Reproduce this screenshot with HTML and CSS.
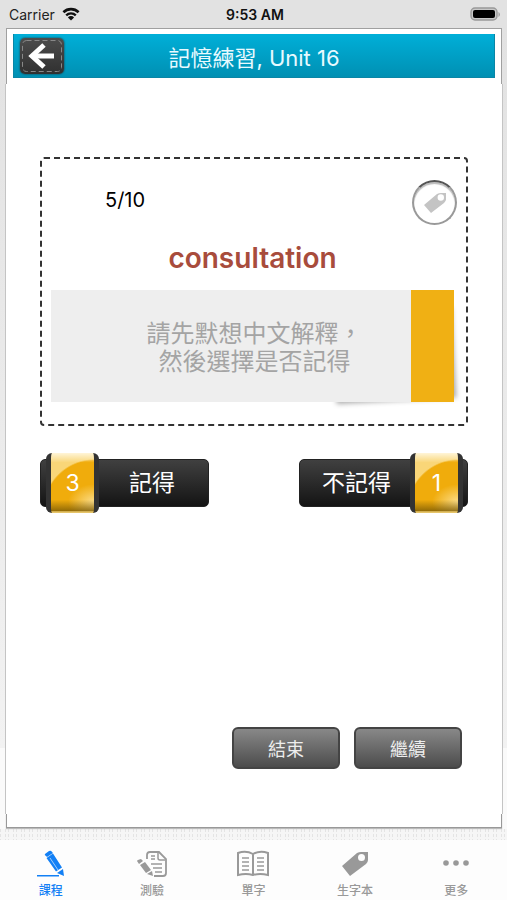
FILE: index.html
```html
<!DOCTYPE html>
<html lang="zh-Hant">
<head>
  <meta charset="UTF-8" />
  <meta name="viewport" content="width=device-width, initial-scale=1.0"/>
  <title>記憶練習, Unit 16</title>
  <link rel="stylesheet" href="styles.css">
</head>
<body>
  <div class="status-bar">
    <div class="carrier">
      <span>Carrier</span>
      <svg width="18" height="14" viewBox="0 0 18 14">
        <path d="M1.4 5.2a11 11 0 0 1 15.2 0" fill="none" stroke="#111" stroke-width="2.6"/>
        <path d="M4.2 8.3a7 7 0 0 1 9.6 0" fill="none" stroke="#111" stroke-width="2.4"/>
        <path d="M9 13.6L5.9 10.4a4.4 4.4 0 0 1 6.2 0z" fill="#111"/>
      </svg>
    </div>
    <div class="time">9:53 AM</div>
    <div class="battery">
      <svg width="31" height="15" viewBox="0 0 31 15">
        <rect x="1" y="1" width="26" height="12" rx="4" fill="#c8c8c8" stroke="#999" stroke-width="1.4"/>
        <rect x="3" y="3" width="22" height="8" rx="2" fill="#000"/>
        <path d="M28.5 5a3 3 0 0 1 0 5z" fill="#999"/>
      </svg>
    </div>
  </div>

  <main class="paper">
    <div class="paper-top">
      <header class="title-bar">
        <button class="back" aria-label="返回">
          <svg width="44" height="36" viewBox="0 0 44 36">
            <rect x="2.5" y="2.5" width="39" height="31" rx="4" fill="none" stroke="#888" stroke-dasharray="5 3"/>
            <path d="M24 7L12 18l12 11" fill="none" stroke="#fff" stroke-width="5"/>
            <path d="M13 18h21" stroke="#fff" stroke-width="5"/>
          </svg>
        </button>
        <h1>記憶練習, Unit 16</h1>
      </header>
    </div>

    <div class="paper-body">
      <section class="card">
        <div class="card-head">
          <span class="count">5/10</span>
          <button class="tag" aria-label="生字本">
            <svg width="24" height="22" viewBox="0 0 24 22">
              <path fill-rule="evenodd" d="M1 13L14 2Q16 1 18 1H23V8Q22 10 21 11L8 21zM21 5.5a3.200 3.200 0 1 0-6.400 0a3.200 3.200 0 1 0 6.400 0z" fill="#c4c4c4"/>
            </svg>
          </button>
        </div>
        <h2>consultation</h2>
        <div class="answer">
          <p>請先默想中文解釋，<br>然後選擇是否記得</p>
        </div>
      </section>

      <div class="choices">
        <button class="choice">
          <span class="badge">3</span>
          <span class="label">記得</span>
        </button>
        <button class="choice choice-right">
          <span class="label">不記得</span>
          <span class="badge">1</span>
        </button>
      </div>

      <div class="actions">
        <button class="action">結束</button>
        <button class="action">繼續</button>
      </div>
    </div>
    <div class="paper-foot"></div>
  </main>

  <nav class="tabs">
    <a href="#" class="active">
      <svg width="28" height="28" viewBox="0 0 28 28" fill="currentColor">
        <path d="M8 4l4-3q2-1 3 1l1 1-6 4-1-1q-2-1-1-2zM9.500 8l6.500-4.500 9 14-6 4zM20 23l6-4 1 7z"/>
        <path d="M13 8l8 12" stroke="#fff" stroke-width=".6"/>
        <path d="M0 25h22v1.500H0z"/>
      </svg>
      課程
    </a>
    <a href="#">
      <svg width="30" height="28" viewBox="0 0 30 28" fill="none" stroke="currentColor" stroke-width="1.800">
        <path d="M10 9V5q0-3 3-3h9l7 7v14q0 3-3 3H17"/>
        <path d="M21 3v5q0 2 2 2h5M14 6h4M14 9h4M14 14h11M16 18h9M18 22h7" stroke-width="1.500"/>
        <path d="M0 11q0-1 4-2l2 2-4 3zM3 15l5-3 6 8-5 3zM10 24l5-3 1 5z" fill="currentColor" stroke="none"/>
      </svg>
      測驗
    </a>
    <a href="#">
      <svg width="32" height="28" viewBox="0 0 32 28" fill="none" stroke="currentColor" stroke-width="2">
        <path d="M16 4Q9 0 1 3v22q8-2 15 0 7-2 15 0V3q-8-3-15 1zv21"/>
        <path d="M5 8h7M5 12h7M5 16h7M5 20h7M20 8h7M20 12h7M20 16h7M20 20h7" stroke-width="1.600"/>
      </svg>
      單字
    </a>
    <a href="#">
      <svg width="28" height="28" viewBox="0 0 28 28">
        <path fill-rule="evenodd" d="M1 16L16 3q2-1 4-1h7v8q0 2-2 4L9 26zM24 7.500a3.500 3.500 0 1 0-7 0a3.500 3.500 0 1 0 7 0z" fill="currentColor"/>
      </svg>
      生字本
    </a>
    <a href="#">
      <svg width="28" height="28" viewBox="0 0 28 28" fill="currentColor">
        <circle cx="4" cy="13" r="2.800"/>
        <circle cx="14" cy="13" r="2.800"/>
        <circle cx="24" cy="13" r="2.800"/>
      </svg>
      更多
    </a>
  </nav>
</body>
</html>
```
FILE: styles.css
```css
* {
  box-sizing: border-box;
}

body {
  margin: 0;
  min-height: 100vh;
  display: flex;
  flex-direction: column;
  font-family: Inter, "Noto Sans CJK TC", sans-serif;
  background: #f4f4f4;
}

h1, h2, p {
  margin: 0;
  font-weight: normal;
}

button {
  font-family: inherit;
  padding: 0;
  border: none;
  cursor: pointer;
}

svg {
  display: block;
}

.status-bar {
  height: 28px;
  padding: 0 6px 0 9px;
  display: grid;
  grid-template-columns: 1fr auto 1fr;
  align-items: center;
  font-size: 14px;
  color: #222;
  background: #e2e2e2;
}

.carrier {
  display: flex;
  align-items: center;
  gap: 7px;
}

.time {
  font-weight: 600;
  color: #111;
}

.battery {
  justify-self: end;
}

.paper {
  flex: 1;
  display: flex;
  flex-direction: column;
  padding: 0 4px 12px 5px;
  background:
    repeating-linear-gradient(transparent 0 3px, #f6f6f6 3px 5px) bottom / 100% 11px no-repeat,
    repeating-linear-gradient(90deg, #e4e4e4 0 1px, #f6f6f6 1px 5px, #e4e4e4 5px 6px, #f6f6f6 6px 8px) bottom / 100% 11px no-repeat,
    linear-gradient(#e2e2e2, #f2f2f2 720px, #fafafa 720px);
}

.paper-top {
  margin: 0 1px;
  padding: 5px 6px 6px;
  background: white;
  border: 1px solid #a0a0a0;
  border-bottom: none;
}

.title-bar {
  height: 44px;
  padding: 0 6px;
  display: grid;
  grid-template-columns: 48px 1fr 48px;
  align-items: center;
  background: linear-gradient(#00afd8, #0090b3);
  border: 1px solid #0a86a6;
  border-width: 0 1px 1px;
}

.title-bar h1 {
  font-size: 22px;
  text-align: center;
  color: #e8faff;
}

.back {
  width: 44px;
  height: 36px;
  border-radius: 5px;
  background: linear-gradient(#4c4c4c, #303030);
  box-shadow: 0 0 2px #222;
}

.paper-body {
  flex: 1;
  display: flex;
  flex-direction: column;
  padding: 73px 34px 45px;
  background: white;
  border: 1px solid #c4c4c4;
  border-width: 0 1px;
}

.paper-foot {
  height: 14px;
  margin: 0 1px;
  background: white;
  border: 1px solid #999;
  border-top: none;
  box-shadow: 0 1px 1px #bbb;
}

.card {
  position: relative;
  z-index: 0;
  padding: 21px 12px 22px 9px;
  border: 2px dashed #333;
  border-radius: 4px;
}

.card-head {
  display: flex;
  justify-content: space-between;
  padding-left: 54px;
}

.count {
  font-size: 20px;
  line-height: 40px;
}

.tag {
  width: 45px;
  height: 45px;
  margin-right: -3px;
  display: grid;
  place-items: center;
  border: 2px solid #999;
  border-top-color: #555;
  border-radius: 50%;
  background: white;
  box-shadow: inset 0 2px 1px #bbb;
}

.card h2 {
  margin: 14px 0 13px;
  font-size: 28px;
  line-height: 38px;
  font-weight: 600;
  text-align: center;
  color: #a84c3c;
}

.answer {
  position: relative;
  height: 112px;
  padding: 4px 0 0 4px;
  display: grid;
  place-items: center;
  background: linear-gradient(270deg, #f0b014 43px, #eee 43px);
}

/* lifted corner */
.answer::after {
  content: "";
  position: absolute;
  z-index: -1;
  right: 3px;
  bottom: 5px;
  width: 120px;
  height: 90px;
  box-shadow: 3px 4px 5px #aaa;
  transform: rotate(-3deg);
}

.answer p {
  font-size: 24px;
  line-height: 28px;
  text-align: center;
  color: #a4a4a4;
}

.choices {
  display: flex;
  justify-content: space-between;
  margin-top: 27px;
}

.choice {
  position: relative;
  z-index: 0;
  width: 169px;
  height: 60px;
  display: flex;
  align-items: center;
  padding-left: 6px;
  font-size: 23px;
  color: white;
  background: none;
}

.choice::before {
  content: "";
  position: absolute;
  z-index: -1;
  inset: 6px 0;
  border: 1px solid #222;
  border-radius: 5px;
  background: linear-gradient(#404040, #141414);
}

.choice-right {
  padding: 0 5px 0 0;
}

.badge {
  width: 53px;
  height: 60px;
  line-height: 60px;
  border: 1px solid #333;
  border-width: 0 5px;
  border-radius: 6px;
  background:
    linear-gradient(transparent 78%, #5a430399 96%, #e6c56a 98%),
    radial-gradient(ellipse 26px 18px at 100% 82%, #ffe9a8cc, transparent),
    linear-gradient(#fff5d8, transparent 16%),
    radial-gradient(ellipse 52px 54px at 100% 100%, #f0ac0c 97%, #f9d678 100%);
}

.label {
  flex: 1;
  text-align: center;
  line-height: 60px;
  padding-right: 4px;
}

.choice-right .label {
  padding: 0 0 0 4px;
}

.actions {
  display: flex;
  justify-content: flex-end;
  gap: 14px;
  margin-top: auto;
  padding-right: 6px;
}

.action {
  width: 108px;
  height: 42px;
  font-size: 18px;
  color: #eee;
  border: 2px solid #444;
  border-radius: 6px;
  background: linear-gradient(#888, #4c4c4c);
}

.tabs {
  height: 60px;
  padding-top: 10px;
  display: grid;
  grid-template-columns: repeat(5, 1fr);
  background: #fdfdfd;
}

.tabs a {
  display: flex;
  flex-direction: column;
  align-items: center;
  gap: 4px;
  font-size: 12px;
  font-weight: 500;
  line-height: 18px;
  color: #999;
  text-decoration: none;
}

.tabs .active {
  color: #1380f5;
}
```
